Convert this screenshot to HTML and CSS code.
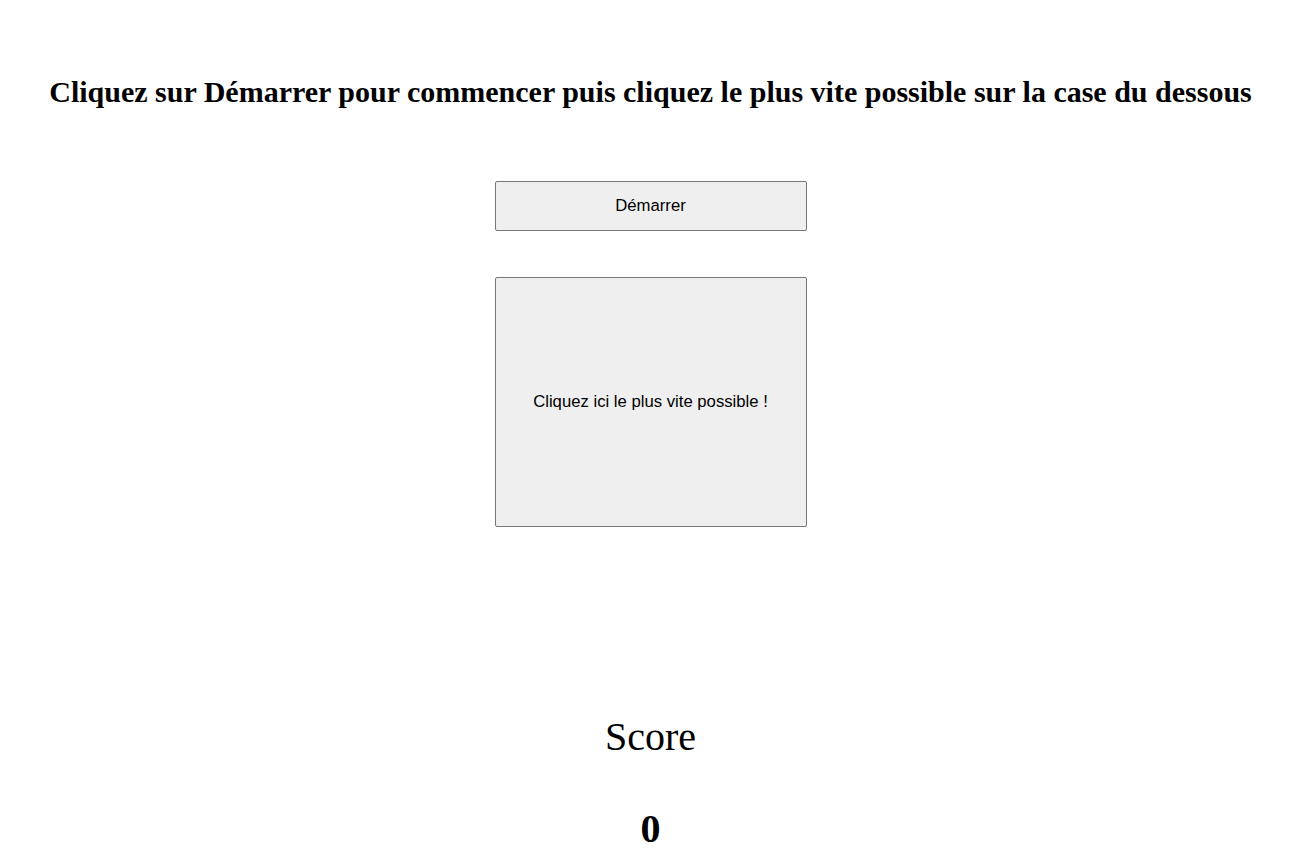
FILE: index.html
```html
<!DOCTYPE html>
<html lang="fr">
<head>
<meta charset="utf-8">
<title>Réflexes</title>
<link rel="stylesheet" href="styles.css">
</head>
<body>
<main class="page">
  <h1 class="title">Cliquez sur Démarrer pour commencer puis cliquez le plus vite possible sur la case du dessous</h1>
  <button class="btn start" type="button">Démarrer</button>
  <button class="btn target" type="button">Cliquez ici le plus vite possible !</button>
  <h2 class="score-label">Score</h2>
  <p class="score">0</p>
</main>
</body>
</html>
```

FILE: styles.css
```css
html, body {
  margin: 0;
  padding: 0;
  background: #ffffff;
}
body {
  font-family: "Liberation Serif", "Times New Roman", serif;
  color: #000;
}
.page {
  display: flex;
  flex-direction: column;
  align-items: center;
  padding: 75px 4px 0 0;
}
.title {
  margin: 0;
  font-size: 30px;
  font-weight: bold;
  line-height: 34px;
  text-align: center;
}
.btn {
  width: 312px;
  box-sizing: border-box;
  background: #efefef;
  border: 1px solid #767676;
  border-radius: 2px;
  font-family: "Liberation Sans", Arial, sans-serif;
  font-size: 16.7px;
  color: #000;
  padding: 0;
}
.start {
  margin-top: 72px;
  height: 50px;
}
.target {
  margin-top: 46px;
  height: 250px;
}
.score-label {
  margin: 187px 0 0 0;
  font-size: 40px;
  font-weight: normal;
  line-height: 46px;
}
.score {
  margin: 46px 0 0 0;
  font-size: 40px;
  font-weight: bold;
  line-height: 46px;
}
```
